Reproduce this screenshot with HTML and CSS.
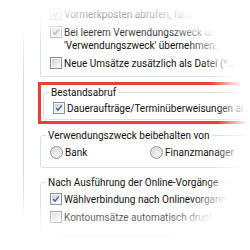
FILE: index.html
```html
<!DOCTYPE html>
<html>
<head>
  <title>Optionen - Online</title>
  <link rel="stylesheet" href="styles.css">
</head>
<body>
  <div class="page">
    <div class="panel">

      <div class="group top">
        <div class="row">
          <span class="check checked faded"><svg viewBox="0 0 12 12"><path d="M2.6 6 L4.8 8.7 L9.4 2.8"/></svg></span>
          <span class="text">Vormerkposten abrufen, falls</span>
        </div>
        <div class="row">
          <span class="check checked faded"><svg viewBox="0 0 12 12"><path d="M2.6 6 L4.8 8.7 L9.4 2.8"/></svg></span>
          <span class="text">Bei leerem Verwendungszweck um<br>'Verwendungszweck' übernehmen.</span>
        </div>
        <div class="row">
          <span class="check"></span>
          <span class="text">Neue Umsätze zusätzlich als Datei (*.xml)</span>
        </div>
      </div>

      <div class="highlight">
        <fieldset class="group inner">
          <legend>Bestandsabruf</legend>
          <div class="row">
            <span class="check checked"><svg viewBox="0 0 12 12"><path d="M2.6 6 L4.8 8.7 L9.4 2.8"/></svg></span>
            <span class="text">Daueraufträge/Terminüberweisungen am</span>
          </div>
        </fieldset>
      </div>

      <fieldset class="group purpose">
        <legend>Verwendungszweck beibehalten von</legend>
        <div class="row radios">
          <div class="option">
            <span class="radio"></span>
            <span class="text">Bank</span>
          </div>
          <div class="option">
            <span class="radio"></span>
            <span class="text">Finanzmanager</span>
          </div>
        </div>
      </fieldset>

      <fieldset class="group after">
        <legend>Nach Ausführung der Online-Vorgänge</legend>
        <div class="row">
          <span class="check checked"><svg viewBox="0 0 12 12"><path d="M2.6 6 L4.8 8.7 L9.4 2.8"/></svg></span>
          <span class="text">Wählverbindung nach Onlinevorgang</span>
        </div>
        <div class="row">
          <span class="check"></span>
          <span class="text">Kontoumsätze automatisch drucken</span>
        </div>
      </fieldset>

    </div>
    <div class="fade"></div>
  </div>
</body>
</html>
```

FILE: styles.css
```css
body {
  margin: 0;
  background-color: #fff;
  font-family: Roboto, "Liberation Sans", sans-serif;
  font-size: 10px;
  color: #111;
}

.page {
  position: relative;
  width: 250px;
  height: 250px;
  overflow: hidden;
}

.panel {
  margin-left: 23px;
  border-left: 1px solid #dcdcdc;
  padding-left: 16px;
  width: 320px;
  height: 250px;
}

.group {
  margin: 0;
  min-width: 0;
  border: 1px solid #d5dfe5;
  border-radius: 3px;
  padding: 0 0 0 5px;
}

.group legend {
  padding: 0 2px;
  line-height: 13px;
  color: #111;
}

.group .row {
  margin-left: 4px;
}

.top {
  border-top: none;
  border-radius: 0 0 3px 3px;
  padding-top: 8px;
  padding-bottom: 6px;
}

.highlight {
  margin-top: 5px;
  margin-left: -2px;
  border: 3px solid #e5403d;
  border-right: none;
  padding: 1px 0 1px 2px;
}

.inner {
  padding-top: 3px;
  padding-bottom: 4px;
}

.purpose {
  margin-top: 5px;
  padding-top: 4px;
  padding-bottom: 8px;
}

.after {
  margin-top: 8px;
  padding-top: 4px;
  padding-bottom: 12px;
}

.row {
  display: flex;
  align-items: flex-start;
  gap: 2px;
  line-height: 13px;
}

.row + .row {
  margin-top: 5px;
}

.radios {
  gap: 0;
}

.option {
  display: flex;
  align-items: flex-start;
  gap: 2px;
  width: 100px;
}

.check {
  flex: none;
  width: 10px;
  height: 10px;
  border: 1px solid #8e8f8f;
  background: linear-gradient(135deg, #c4c7cc 0%, #e9eaec 55%, #fbfbfb 100%);
  box-shadow: inset 0 0 0 1px #f6f6f6;
  display: flex;
}

.check svg {
  width: 10px;
  height: 10px;
}

.check path {
  fill: none;
  stroke: #4a5d98;
  stroke-width: 1.6;
}

.check.faded {
  border-color: #b9bbbd;
  background: linear-gradient(135deg, #dcdee2, #f6f6f7);
}

.check.faded path {
  stroke: #9aa4bb;
}

.radio {
  flex: none;
  width: 11px;
  height: 11px;
  border: 1px solid #8e8f8f;
  border-radius: 50%;
  background: radial-gradient(circle at 55% 60%, #f6f6f6 0%, #dcdddf 55%, #c3c5c8 100%);
  box-shadow: inset 0 0 0 1px #eeeeee;
}

.fade {
  position: absolute;
  top: 0;
  left: 0;
  width: 250px;
  height: 250px;
  pointer-events: none;
  background:
    linear-gradient(to bottom, rgba(255, 255, 255, 0.95) 0, rgba(255, 255, 255, 0) 40px),
    linear-gradient(to top, #fff 0, rgba(255, 255, 255, 0) 48px),
    radial-gradient(ellipse 132px 140px at 115px 125px, rgba(255, 255, 255, 0) 78%, #fff 100%);
}
```
